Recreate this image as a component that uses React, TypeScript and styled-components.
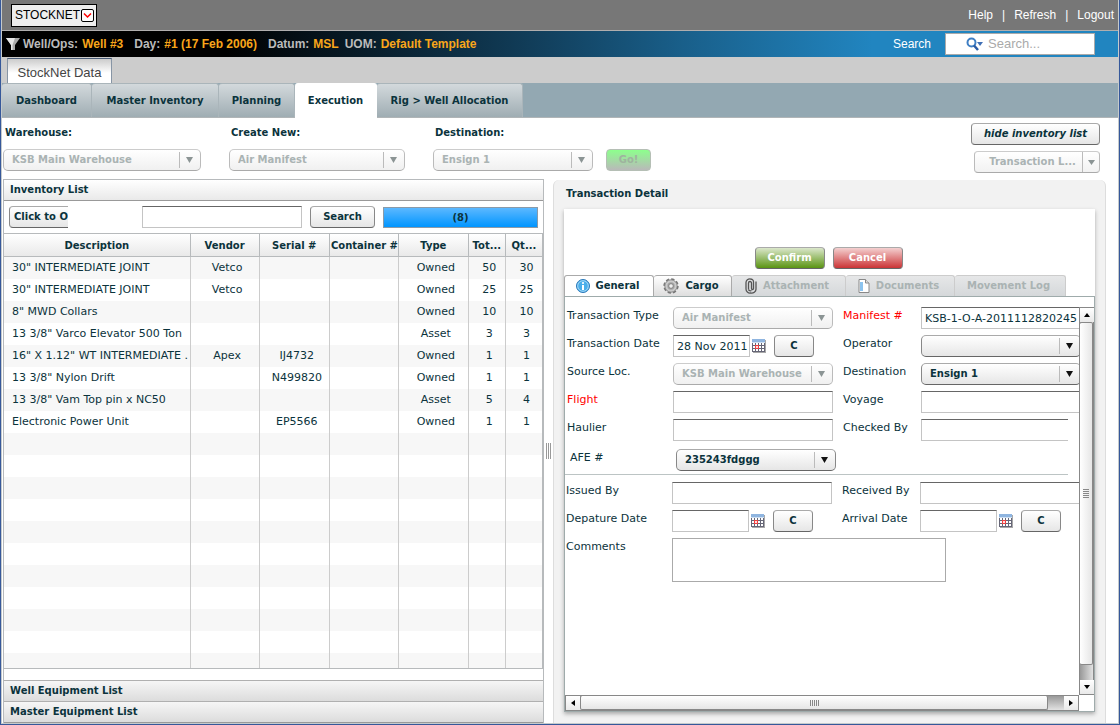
import React from 'react';
import styled, { createGlobalStyle, css } from 'styled-components';

const ink = '#0b333c';
const faded = '#aab3b3';
const verdana = '"DejaVu Sans", Verdana, sans-serif';
const arial = '"Liberation Sans", Arial, sans-serif';
const boldText = `bold 10px/16px ${verdana}`;

const GlobalStyle = createGlobalStyle`
  *, *::before, *::after { box-sizing: border-box; }
  body { margin: 0; background: #fff; color: ${ink}; font: 11px/16px ${verdana}; }
  button, input, select, textarea { font: inherit; color: inherit; margin: 0; border-radius: 0; }
`;

const Page = styled.div`
  min-height: 100vh;
  display: flex;
  flex-direction: column;
  border: solid #36589a;
  border-width: 0 1px 1px;
`;
const Inner = styled.div`
  flex: 1;
  display: flex;
  flex-direction: column;
  border: solid #c5cacc;
  border-width: 0 1px 1px;
`;

const TopBar = styled.header`
  height: 31px;
  display: flex;
  align-items: center;
  justify-content: space-between;
  padding: 0 4px 0 9px;
  background: #777;
  border-bottom: 1px solid #b0aeae;
  font: 12px/16px ${arial};
`;
const BrandButton = styled.button`
  display: flex;
  align-items: center;
  justify-content: space-between;
  width: 86px;
  height: 23px;
  padding: 0 2px 0 3px;
  border: 1px solid #000;
  background: #eee;
  color: #000;
  white-space: nowrap;
  svg { flex: none; }
`;
const TopLinks = styled.nav`
  display: flex;
  gap: 9px;
  color: #fff;
  a { color: #fff; text-decoration: none; }
`;

const ContextBar = styled.div`
  height: 26px;
  display: flex;
  align-items: center;
  padding: 0 23px 0 4px;
  background: linear-gradient(90deg, #000 20%, #12415f 49%, #195f8a 61%, #2185c0 78%);
  font: bold 12px/16px ${arial};
`;
const ContextItem = styled.span<{ $gap: number }>`
  margin-right: ${(p) => p.$gap}px;
  color: #bbb;
  white-space: nowrap;
  b { margin-left: 4px; color: #f9a61a; }
`;
const SearchLabel = styled.label`
  margin-left: auto;
  margin-right: 14px;
  color: #fff;
  font-weight: normal;
`;
const SearchBox = styled.div`
  display: flex;
  align-items: center;
  gap: 3px;
  width: 150px;
  height: 22px;
  padding-left: 19px;
  border: 1px solid #aaa;
  background: #fff;
  input {
    width: 100px;
    padding: 0;
    border: 0;
    outline: 0;
    background: none;
    font: 13px/18px ${arial};
  }
  input::placeholder { color: #aaa; opacity: 1; }
`;

const TitleStrip = styled.div`
  height: 26px;
  padding: 1px 5px 0;
  background: #ccc;
`;
const TitleTab = styled.h1`
  width: 105px;
  height: 25px;
  margin: 0;
  padding-top: 3px;
  border: solid #8795a5;
  border-width: 1px 1px 0;
  border-top-color: #4a5d78;
  background: linear-gradient(#ccc, #fff 14px);
  color: #444;
  font: 13px/22px ${arial};
  text-align: center;
`;

const MainNav = styled.nav`
  display: flex;
  height: 35px;
  background: #93a8b2;
  border-bottom: 1px solid #b0b5b7;
`;
const MainTab = styled.button<{ $w: number; $active?: boolean }>`
  width: ${(p) => p.$w}px;
  height: 34px;
  padding: 0;
  border: solid #aab5ba;
  border-width: 1px 1px 0 0;
  border-radius: 3px 3px 0 0;
  background: linear-gradient(#d3d9dc, #9fadb3);
  font: ${boldText};
  white-space: nowrap;
  ${(p) => p.$active && css`
    height: 35px;
    background: #fff;
    border-color: #fff;
  `}
`;

const Filters = styled.div`
  display: flex;
  height: 61px;
  padding: 7px 18px 0 1px;
`;
const FilterField = styled.div<{ $w: number; $gap: number }>`
  width: ${(p) => p.$w}px;
  margin-right: ${(p) => p.$gap}px;
  label {
    display: block;
    height: 24px;
    padding-left: 2px;
    font: ${boldText};
  }
`;

const buttonFace = css`
  height: 22px;
  padding: 0;
  border: 1px solid #888;
  border-color: #aaa #888 #666;
  border-radius: 4px;
  background: linear-gradient(#fff, #e6e6e6);
  font: ${boldText};
  white-space: nowrap;
`;
const Button = styled.button<{ $w: number }>`
  ${buttonFace}
  width: ${(p) => p.$w}px;
`;
const GoButton = styled(Button)`
  margin-top: 24px;
  border: 1px solid #b5bfb5;
  background: linear-gradient(#8dff8d, #b9b9b9);
  color: #9fb39f;
`;
const ActionButton = styled(Button)<{ $tone: 'green' | 'red' }>`
  color: #fff;
  background: ${(p) => p.$tone === 'green'
    ? 'linear-gradient(#dbe7cb, #5b9513)'
    : 'linear-gradient(#f4d0d0, #cb3436)'};
`;
const FilterActions = styled.div`
  display: flex;
  flex-direction: column;
  align-items: flex-end;
  gap: 6px;
  margin-left: auto;
  margin-top: -2px;
`;
const HideButton = styled(Button)`
  font-style: italic;
`;
const SplitButton = styled.button`
  ${buttonFace}
  display: flex;
  align-items: center;
  width: 126px;
  border-color: #ccc #bbb #aaa;
  background: linear-gradient(#fff, #f2f2f2);
  color: ${faded};
  span { flex: 1; padding-left: 8px; }
  svg { width: 17px; height: 20px; border-left: 1px solid #bbb; padding: 0 4px; }
`;

const SelectShell = styled.div<{ $disabled?: boolean }>`
  position: relative;
  height: 22px;
  select {
    appearance: none;
    display: block;
    width: 100%;
    height: 22px;
    padding: 0 24px 0 8px;
    border: 1px solid #888;
    border-color: #aaa #888 #666;
    border-radius: 5px;
    background: linear-gradient(#fff, #e6e6e6);
    font: ${boldText};
    opacity: 1;
  }
  ${(p) => p.$disabled && css`
    select {
      color: ${faded};
      border-color: #ccc #bbb #aaa;
      background: linear-gradient(#fff, #f0f0f0);
    }
  `}
`;
const SelectArrow = styled.svg`
  position: absolute;
  top: 3px;
  right: 0;
  width: 22px;
  height: 16px;
  border-left: 1px solid #bbb;
  pointer-events: none;
`;

const Workspace = styled.main`
  flex: 1;
  display: grid;
  grid-template-columns: minmax(0, 541fr) 9px minmax(0, 553fr);
  padding: 0 12px 0 1px;
`;

const ListPanel = styled.section`
  display: flex;
  flex-direction: column;
  border: solid #b7babc;
  border-width: 0 1px;
`;
const ListTitle = styled.h2`
  height: 22px;
  margin: 0;
  padding: 2px 6px;
  border: solid #b7babc;
  border-width: 1px 0;
  border-bottom-color: #999;
  background: linear-gradient(#fff, #e9e9e9);
  font: ${boldText};
`;
const ListTools = styled.div`
  display: flex;
  align-items: center;
  gap: 8px;
  height: 33px;
  padding: 0 5px;
  border-bottom: 1px solid #b7babc;
`;
const OpenButton = styled.button`
  ${buttonFace}
  width: 59px;
  margin-right: 66px;
  padding-left: 4px;
  border-right: 0;
  border-radius: 4px 0 0 4px;
  overflow: hidden;
  text-align: left;
`;
const TextInput = styled.input<{ $w?: number; $open?: boolean }>`
  width: ${(p) => p.$w ?? 160}px;
  height: 22px;
  padding: 0 0 0 3px;
  border: 1px solid #c4c4c4;
  border-top-color: #666;
  background: #fff;
  outline: 0;
  ${(p) => p.$open && css`border-right: 0;`}
`;
const CountBar = styled.output`
  flex: 1;
  height: 21px;
  padding-top: 2px;
  border: 1px solid #8a9aa8;
  background: linear-gradient(#5cb8ff, #0095ff);
  font: ${boldText};
  text-align: center;
`;

const Table = styled.table`
  width: 100%;
  table-layout: fixed;
  border-collapse: separate;
  border-spacing: 0;
  border-bottom: 1px solid #b7babc;
  border-right: 1px solid #b7babc;
  th {
    height: 23px;
    padding: 1px 1px 0;
    border-right: 1px solid #b7babc;
    border-bottom: 1px solid #b7babc;
    background: linear-gradient(#fff, #e9e9e9);
    font: ${boldText};
    white-space: nowrap;
  }
  td {
    height: 22px;
    padding: 0 1px 0 6px;
    border-right: 1px solid #ccc;
    overflow: hidden;
    text-align: center;
    white-space: nowrap;
  }
  th:last-child, td:last-child { border-right: 0; }
  td:first-child { padding-left: 8px; text-align: left; }
  tbody tr:nth-child(odd) { background: #f7f7f7; }
  tbody tr:last-child td { height: 15px; }
`;
const SectionButton = styled.button`
  height: 21px;
  padding: 0 6px;
  border: 0;
  border-top: 1px solid #b0b0b0;
  background: linear-gradient(#f6f6f6, #dcdcdc);
  font: ${boldText};
  text-align: left;
  &:first-of-type { margin-top: auto; }
  &:last-of-type { height: 22px; border-bottom: 1px solid #999; }
`;

const Splitter = styled.div`
  display: flex;
  align-items: center;
  justify-content: center;
  gap: 1px;
  i { width: 1px; height: 16px; background: #999; }
`;

const Detail = styled.section`
  display: flex;
  flex-direction: column;
  margin-top: 1px;
  padding: 0 10px 11px;
  border: solid #ddd;
  border-width: 0 1px;
  border-radius: 6px 6px 0 0;
  background: #f2f2f2;
`;
const DetailTitle = styled.h2`
  height: 29px;
  margin: 0;
  padding: 6px 2px;
  font: ${boldText};
`;
const DetailBody = styled.div`
  flex: 1;
  display: flex;
  flex-direction: column;
  padding-top: 38px;
  background: #fff;
  box-shadow: 0 2px 4px #aaa;
`;
const Actions = styled.div`
  display: flex;
  justify-content: center;
  gap: 8px;
  margin-bottom: 6px;
  padding-right: 2px;
`;
const DetailTabs = styled.div`
  display: flex;
  margin-bottom: -1px;
`;
const DetailTab = styled.button<{ $w: number; $active?: boolean }>`
  display: flex;
  align-items: center;
  justify-content: center;
  gap: 6px;
  width: ${(p) => p.$w}px;
  height: 22px;
  padding: 0 3px 0 0;
  border: 1px solid #aaa;
  border-left-width: 0;
  border-radius: 3px 3px 0 0;
  background: linear-gradient(#fff, #dedede);
  font: ${boldText};
  white-space: nowrap;
  &:disabled {
    background: linear-gradient(#e6e7e8, #d5d8da);
    border-color: #ccc #ccc #aab3b3;
    color: ${faded};
  }
  ${(p) => p.$active && css`
    border-left-width: 1px;
    border-bottom-color: #fff;
    background: #fff;
  `}
`;
const Frame = styled.div`
  flex: 1;
  display: grid;
  grid-template: minmax(0, 1fr) 16px / minmax(0, 1fr) 15px;
  padding-top: 10px;
  border: 1px solid #9fabab;
`;

const Form = styled.form`
  overflow: hidden;
`;
const FieldGrid = styled.div<{ $indent: number }>`
  display: grid;
  grid-template-columns: 106px 170px 78px 160px;
  row-gap: 6px;
  padding-left: ${(p) => p.$indent}px;
`;
const FieldLabel = styled.label<{ $required?: boolean }>`
  height: 18px;
  line-height: 18px;
  white-space: nowrap;
  color: ${(p) => (p.$required ? '#f00' : ink)};
`;
const Control = styled.div`
  width: 160px;
  height: 22px;
`;
const DateControl = styled(Control)`
  display: flex;
  align-items: center;
  svg { margin: 0 8px 0 2px; flex: none; }
`;
const AfeRow = styled.div`
  display: flex;
  height: 26px;
  margin: 8px 11px 7px 0;
  padding-left: 5px;
  border-bottom: 1px solid #bcc4c4;
  label { width: 106px; }
`;
const CommentRow = styled.div`
  display: flex;
  margin-top: 6px;
  padding-left: 1px;
  label { width: 106px; }
`;
const Comments = styled.textarea`
  display: block;
  width: 274px;
  height: 44px;
  border: 1px solid #aaa;
  resize: none;
`;

const ScrollBar = styled.div<{ $vertical?: boolean }>`
  display: flex;
  flex-direction: ${(p) => (p.$vertical ? 'column' : 'row')};
  border: 1px solid #888;
  background: linear-gradient(${(p) => (p.$vertical ? '90deg' : '180deg')}, #999, #e2e2e2);
`;
const ScrollButton = styled.button`
  display: flex;
  align-items: center;
  justify-content: center;
  flex: none;
  width: 14px;
  height: 14px;
  padding: 0;
  border: 0;
  background: linear-gradient(#fff, #e9e9e9);
`;
const Thumb = styled.div<{ $vertical?: boolean }>`
  flex: 1;
  display: flex;
  flex-direction: ${(p) => (p.$vertical ? 'column' : 'row')};
  align-items: center;
  justify-content: center;
  gap: 1px;
  border: 1px solid #888;
  border-radius: 2px;
  background: linear-gradient(${(p) => (p.$vertical ? '90deg' : '180deg')}, #fff, #e6e6e6);
  ${(p) => (p.$vertical
    ? css`margin-bottom: 15px; border-left: 0; i { width: 6px; height: 1px; background: #888; }`
    : css`margin-right: 16px; border-top: 0; i { width: 1px; height: 6px; background: #888; }`)}
`;

function Select({ id, value, disabled }: { id: string; value: string; disabled?: boolean }) {
  return (
    <SelectShell $disabled={disabled}>
      <select id={id} disabled={disabled} defaultValue={value}>
        <option>{value}</option>
      </select>
      <SelectArrow viewBox="0 0 21 16">
        <path d="M6 5h7l-3.500 6z" fill={disabled ? '#8b9494' : '#111'} />
      </SelectArrow>
    </SelectShell>
  );
}

function CalendarIcon() {
  return (
    <svg width="14" height="14" viewBox="0 0 14 14" shapeRendering="crispEdges">
      <path d="M1 1h13v13H1z" fill="#a8a8a8" />
      <path d="M0 0h13v13H0z" fill="#fff" />
      <path d="M0 0h13v3H0z" fill="#8fb5e0" />
      <path d="M0 3h13v1H0z" fill="#cfe0f2" />
      <path d="M0 4h1v9H0zM3 4h1v9H3zM6 4h1v9H6zM9 4h1v9H9zM12 4h1v9h-1zM0 6h13v1H0zM0 9h13v1H0zM0 12h13v1H0z" fill="#667" />
      <path d="M3 6h4v4H3z" fill="#f04040" />
      <path d="M4 7h2v2H4z" fill="#fdd" />
    </svg>
  );
}

function InfoIcon() {
  return (
    <svg width="14" height="14" viewBox="0 0 14 14">
      <circle cx="7" cy="7" r="6.500" fill="#4aaeea" stroke="#2a78b8" />
      <circle cx="7" cy="7" r="5.300" fill="none" stroke="#bfe3fa" strokeWidth=".8" />
      <circle cx="7" cy="4" r="1.100" fill="#fff" />
      <path d="M6 6h2v5H6z" fill="#fff" />
    </svg>
  );
}

function GearIcon() {
  return (
    <svg width="16" height="16" viewBox="0 0 16 16">
      <circle cx="8" cy="8" r="6.800" fill="none" stroke="#777" strokeWidth="1.800" strokeDasharray="3.300 2.040" />
      <circle cx="8" cy="8" r="6.200" fill="#cacaca" stroke="#777" strokeWidth=".8" />
      <circle cx="8" cy="8" r="3.700" fill="#a4a4a4" />
      <circle cx="8" cy="8" r="2.300" fill="#eee" stroke="#777" strokeWidth=".8" />
    </svg>
  );
}

function ClipIcon() {
  return (
    <svg width="12" height="16" viewBox="0 0 12 16" fill="none" stroke="#555" strokeWidth="1.300">
      <path d="M3.500 11.500V5a1.500 1.500 0 0 1 3 0v5.500a1 1 0 0 0 2 0V4a3 2.800 0 0 0-3-3 4 3.500 0 0 0-4.500 3.500V11a4 4 0 0 0 4.500 4A4.500 4 0 0 0 11 11V3.500" />
      <path d="M3.500 11.500a2 1.800 0 0 0 3 1" />
    </svg>
  );
}

function DocumentIcon() {
  return (
    <svg width="12" height="14" viewBox="0 0 12 14">
      <path d="M1 .5h6.500l3.500 3.500v9.500H1z" fill="#fff" stroke="#888" />
      <path d="M7.500.5V4H11" fill="#ddd" stroke="#888" />
      <path d="M2 3h3v9H2z" fill="#8cc3ee" />
    </svg>
  );
}

const rows: string[][] = [
  ['30" INTERMEDIATE JOINT', 'Vetco', '', '', 'Owned', '50', '30'],
  ['30" INTERMEDIATE JOINT', 'Vetco', '', '', 'Owned', '25', '25'],
  ['8" MWD Collars', '', '', '', 'Owned', '10', '10'],
  ['13 3/8" Varco Elevator 500 Ton', '', '', '', 'Asset', '3', '3'],
  ['16" X 1.12" WT INTERMEDIATE .', 'Apex', 'IJ4732', '', 'Owned', '1', '1'],
  ['13 3/8" Nylon Drift', '', 'N499820', '', 'Owned', '1', '1'],
  ['13 3/8" Vam Top pin x NC50', '', '', '', 'Asset', '5', '4'],
  ['Electronic Power Unit', '', 'EP5566', '', 'Owned', '1', '1'],
  ...Array.from({ length: 11 }, () => Array<string>(7).fill('')),
];
const columns: [string, string][] = [
  ['Description', '34.7%'], ['Vendor', '12.8%'], ['Serial #', '13.1%'],
  ['Container #', '12.8%'], ['Type', '13%'], ['Tot...', '6.9%'], ['Qt...', '6.7%'],
];

function InventoryPanel() {
  return (
    <ListPanel>
      <ListTitle>Inventory List</ListTitle>
      <ListTools>
        <OpenButton type="button">Click to O</OpenButton>
        <TextInput aria-label="Filter inventory" />
        <Button type="button" $w={65}>Search</Button>
        <CountBar>(8)</CountBar>
      </ListTools>
      <Table>
        <colgroup>{columns.map(([name, width]) => <col key={name} width={width} />)}</colgroup>
        <thead><tr>{columns.map(([name]) => <th key={name} scope="col">{name}</th>)}</tr></thead>
        <tbody>
          {rows.map((cells, r) => <tr key={r}>{cells.map((c, i) => <td key={i}>{c}</td>)}</tr>)}
        </tbody>
      </Table>
      <SectionButton type="button">Well Equipment List</SectionButton>
      <SectionButton type="button">Master Equipment List</SectionButton>
    </ListPanel>
  );
}

function DateField({ id, value = '' }: { id: string; value?: string }) {
  return (
    <DateControl>
      <TextInput id={id} $w={77} defaultValue={value} />
      <CalendarIcon />
      <Button type="button" $w={40}>C</Button>
    </DateControl>
  );
}

function TransactionForm() {
  return (
    <Form>
      <FieldGrid $indent={2}>
        <FieldLabel htmlFor="type">Transaction Type</FieldLabel>
        <Control><Select id="type" value="Air Manifest" disabled /></Control>
        <FieldLabel htmlFor="manifest" $required>Manifest #</FieldLabel>
        <TextInput id="manifest" defaultValue="KSB-1-O-A-2011112820245" />

        <FieldLabel htmlFor="date">Transaction Date</FieldLabel>
        <DateField id="date" value="28 Nov 2011" />
        <FieldLabel htmlFor="operator">Operator</FieldLabel>
        <Control><Select id="operator" value="" /></Control>

        <FieldLabel htmlFor="source">Source Loc.</FieldLabel>
        <Control><Select id="source" value="KSB Main Warehouse" disabled /></Control>
        <FieldLabel htmlFor="destination">Destination</FieldLabel>
        <Control><Select id="destination" value="Ensign 1" /></Control>

        <FieldLabel htmlFor="flight" $required>Flight</FieldLabel>
        <TextInput id="flight" />
        <FieldLabel htmlFor="voyage">Voyage</FieldLabel>
        <TextInput id="voyage" />

        <FieldLabel htmlFor="haulier">Haulier</FieldLabel>
        <TextInput id="haulier" />
        <FieldLabel htmlFor="checked">Checked By</FieldLabel>
        <TextInput id="checked" $w={147} $open />
      </FieldGrid>
      <AfeRow>
        <FieldLabel htmlFor="afe">AFE #</FieldLabel>
        <Control><Select id="afe" value="235243fdggg" /></Control>
      </AfeRow>
      <FieldGrid $indent={1}>
        <FieldLabel htmlFor="issued">Issued By</FieldLabel>
        <TextInput id="issued" />
        <FieldLabel htmlFor="received">Received By</FieldLabel>
        <TextInput id="received" />

        <FieldLabel htmlFor="departure">Depature Date</FieldLabel>
        <DateField id="departure" />
        <FieldLabel htmlFor="arrival">Arrival Date</FieldLabel>
        <DateField id="arrival" />
      </FieldGrid>
      <CommentRow>
        <FieldLabel htmlFor="comments">Comments</FieldLabel>
        <Comments id="comments" />
      </CommentRow>
    </Form>
  );
}

const grip = [0, 1, 2, 3, 4].map((n) => <i key={n} />);

function Scroller({ vertical }: { vertical?: boolean }) {
  return (
    <ScrollBar $vertical={vertical}>
      <ScrollButton type="button" aria-label={vertical ? 'Scroll up' : 'Scroll left'}>
        <svg width="6" height="6" viewBox="0 0 6 6"><path d={vertical ? 'M0 5h6L3 1z' : 'M5 0v6L1 3z'} /></svg>
      </ScrollButton>
      <Thumb $vertical={vertical}>{grip}</Thumb>
      <ScrollButton type="button" aria-label={vertical ? 'Scroll down' : 'Scroll right'}>
        <svg width="6" height="6" viewBox="0 0 6 6"><path d={vertical ? 'M0 1h6L3 5z' : 'M1 0v6l4-3z'} /></svg>
      </ScrollButton>
    </ScrollBar>
  );
}

function TransactionPanel() {
  return (
    <Detail>
      <DetailTitle>Transaction Detail</DetailTitle>
      <DetailBody>
        <Actions>
          <ActionButton type="button" $w={70} $tone="green">Confirm</ActionButton>
          <ActionButton type="button" $w={70} $tone="red">Cancel</ActionButton>
        </Actions>
        <DetailTabs>
          <DetailTab type="button" $w={90} $active><InfoIcon />General</DetailTab>
          <DetailTab type="button" $w={78}><GearIcon />Cargo</DetailTab>
          <DetailTab type="button" $w={114} disabled><ClipIcon />Attachment</DetailTab>
          <DetailTab type="button" $w={109} disabled><DocumentIcon />Documents</DetailTab>
          <DetailTab type="button" $w={111} disabled>Movement Log</DetailTab>
        </DetailTabs>
        <Frame>
          <TransactionForm />
          <Scroller vertical />
          <Scroller />
        </Frame>
      </DetailBody>
    </Detail>
  );
}

export default function App() {
  return (
    <Page>
      <GlobalStyle />
      <Inner>
        <TopBar>
          <BrandButton type="button">
            STOCKNET
            <svg width="13" height="13" viewBox="0 0 13 13">
              <rect x=".5" y=".5" width="12" height="12" rx="1.500" fill="#fff" stroke="#000" />
              <path d="M3 4.500l3.500 3.500L10 4.500" fill="none" stroke="#f00" strokeWidth="1.500" />
            </svg>
          </BrandButton>
          <TopLinks>
            <a href="#help">Help</a>|<a href="#refresh">Refresh</a>|<a href="#logout">Logout</a>
          </TopLinks>
        </TopBar>
        <ContextBar>
          <svg width="17" height="16" viewBox="0 0 17 16">
            <path d="M0 2h14L9 9v5H5V9z" fill="#aaa" />
            <path d="M0 2h9L6.500 9v5H5V9z" fill="#e6e6e6" />
          </svg>
          <ContextItem $gap={11}>Well/Ops:<b>Well #3</b></ContextItem>
          <ContextItem $gap={11}>Day:<b>#1 (17 Feb 2006)</b></ContextItem>
          <ContextItem $gap={6}>Datum:<b>MSL</b></ContextItem>
          <ContextItem $gap={0}>UOM:<b>Default Template</b></ContextItem>
          <SearchLabel htmlFor="search">Search</SearchLabel>
          <SearchBox>
            <svg width="20" height="14" viewBox="0 0 20 14" fill="none">
              <circle cx="6.500" cy="5.500" r="4" stroke="#3f7fc4" strokeWidth="2" />
              <path d="M9 8.500l4 4.500" stroke="#2a5ba5" strokeWidth="2.500" />
              <path d="M12 5h6l-3 4z" fill="#3f6fb5" />
            </svg>
            <input id="search" placeholder="Search..." />
          </SearchBox>
        </ContextBar>
        <TitleStrip><TitleTab>StockNet Data</TitleTab></TitleStrip>
        <MainNav>
          <MainTab type="button" $w={90}>Dashboard</MainTab>
          <MainTab type="button" $w={127}>Master Inventory</MainTab>
          <MainTab type="button" $w={76}>Planning</MainTab>
          <MainTab type="button" $w={82} $active>Execution</MainTab>
          <MainTab type="button" $w={146}>Rig &gt; Well Allocation</MainTab>
        </MainNav>
        <Filters>
          <FilterField $w={198} $gap={28}>
            <label htmlFor="warehouse">Warehouse:</label>
            <Select id="warehouse" value="KSB Main Warehouse" disabled />
          </FilterField>
          <FilterField $w={176} $gap={28}>
            <label htmlFor="create">Create New:</label>
            <Select id="create" value="Air Manifest" disabled />
          </FilterField>
          <FilterField $w={160} $gap={13}>
            <label htmlFor="target">Destination:</label>
            <Select id="target" value="Ensign 1" disabled />
          </FilterField>
          <GoButton type="button" $w={45} disabled>Go!</GoButton>
          <FilterActions>
            <HideButton type="button" $w={129}>hide inventory list</HideButton>
            <SplitButton type="button" disabled>
              <span>Transaction L...</span>
              <svg viewBox="0 0 8 20"><path d="M1 8h7l-3.500 5z" fill="#8b9494" /></svg>
            </SplitButton>
          </FilterActions>
        </Filters>
        <Workspace>
          <InventoryPanel />
          <Splitter><i /><i /><i /></Splitter>
          <TransactionPanel />
        </Workspace>
      </Inner>
    </Page>
  );
}
